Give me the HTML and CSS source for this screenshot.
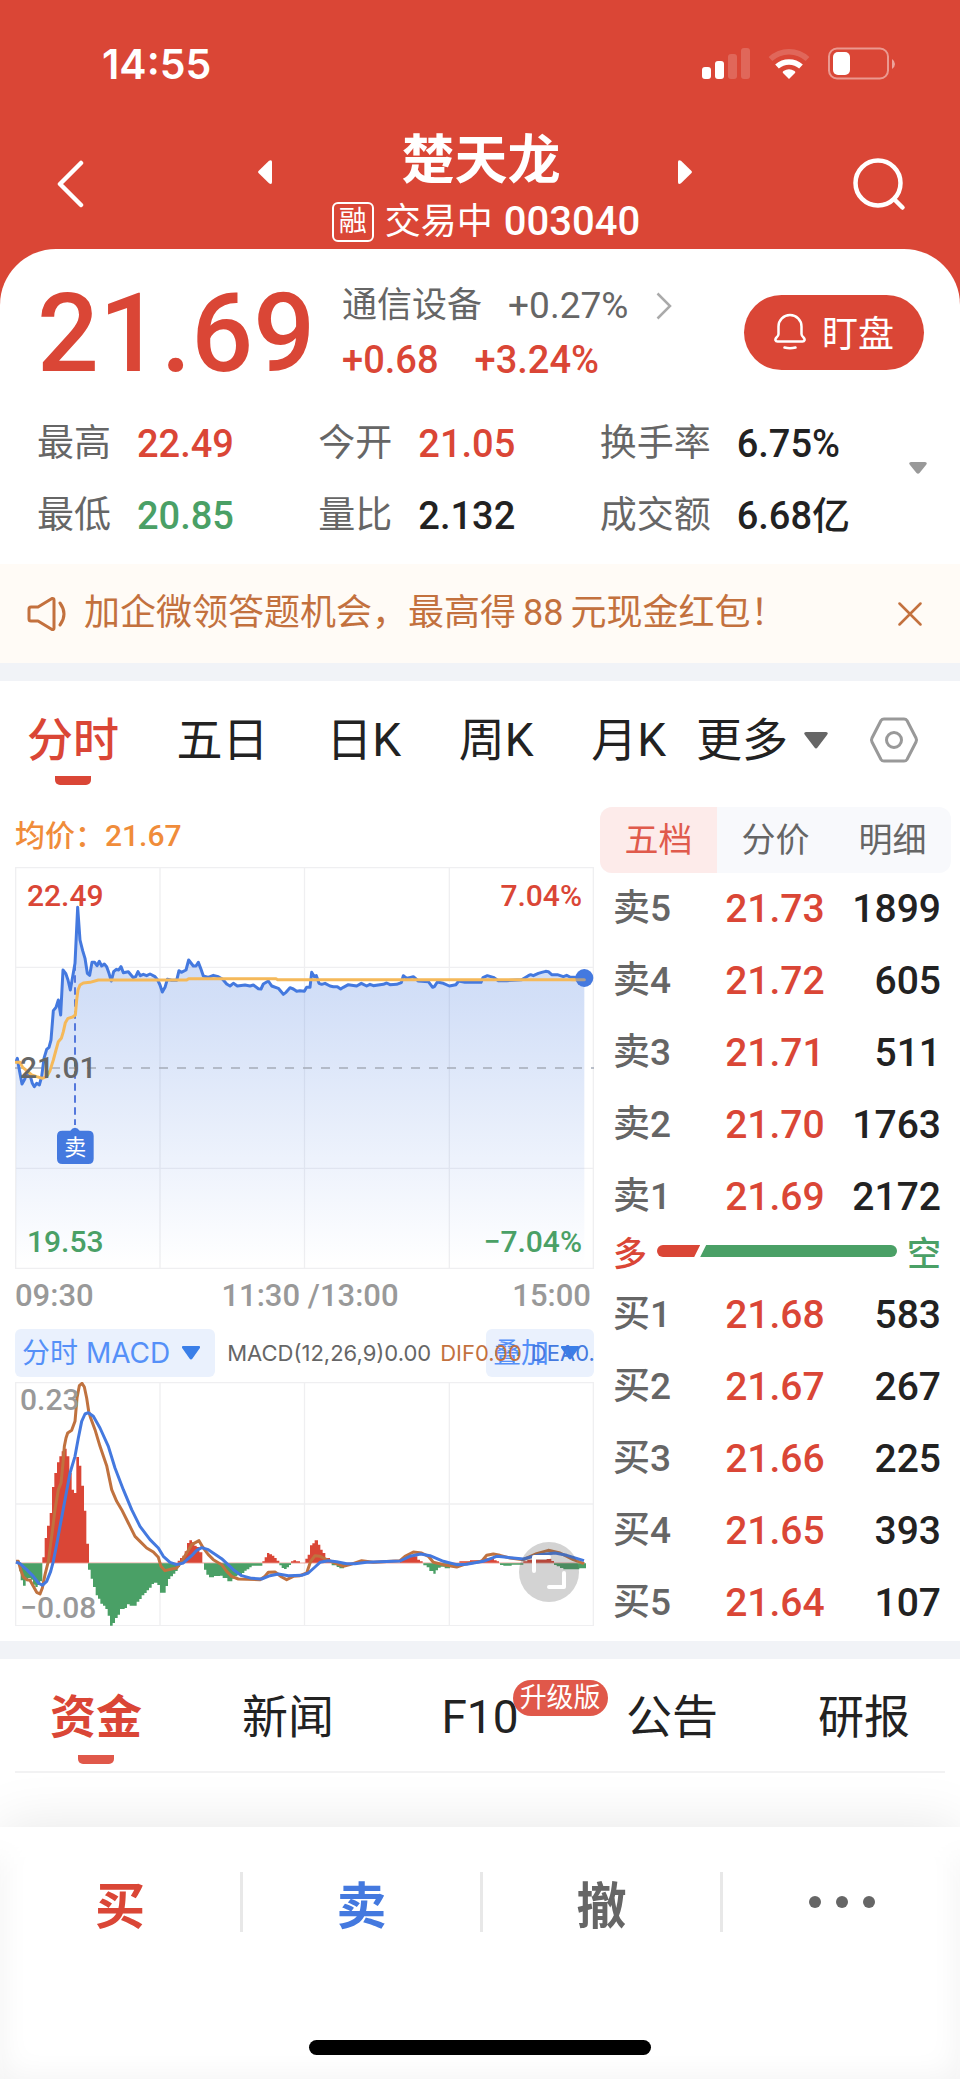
FILE: index.html
```html
<!DOCTYPE html>
<html lang="zh-CN">
<head>
<meta charset="utf-8">
<meta name="viewport" content="width=device-width, initial-scale=1">
<title>楚天龙 003040</title>
<link rel="stylesheet" href="styles.css">
</head>
<body>
<header class="header">
  <div class="status">
    <span class="status-time">14:55</span>
    <svg class="status-icons" viewBox="0 0 194 34" aria-hidden="true">
      <g fill="#fff">
        <rect x="0" y="20" width="9" height="12" rx="3"/>
        <rect x="13" y="14" width="9" height="18" rx="3"/>
        <rect x="26" y="7" width="9" height="25" rx="3" opacity=".18"/>
        <rect x="39" y="1" width="9" height="31" rx="3" opacity=".18"/>
        <path d="M87 32l-6-6q-1-1 .5-2a10 10 0 0 1 11 0q1.500 1 .5 2z"/>
        <rect x="131" y="5" width="17" height="23" rx="5"/>
        <path d="M190 12q3 2 3 5t-3 5z" opacity=".5"/>
      </g>
      <g fill="none" stroke="#fff">
        <path d="M75 19.500a18 18 0 0 1 24 0" stroke-width="5.500"/>
        <path d="M68.500 12a27 27 0 0 1 37 0" stroke-width="5.500" opacity=".18"/>
        <rect x="127" y="1.500" width="59" height="30" rx="8" stroke-width="2" opacity=".45"/>
      </g>
    </svg>
  </div>
  <nav class="nav">
    <button class="nav-button" type="button" aria-label="返回">
      <svg width="28" height="50" viewBox="0 0 28 50" fill="none" stroke="#fff" stroke-width="4.500" stroke-linecap="round" stroke-linejoin="round"><path d="M25 4L4 25l21 21"/></svg>
    </button>
    <div class="nav-center">
      <div class="title-row">
        <button class="step" type="button" aria-label="上一只"><svg width="14" height="24" viewBox="0 0 14 24" fill="#fff"><path d="M.5 11L11 .8Q14-1 14 2v20q0 3-3 1.200L.5 13q-.8-1 0-2z"/></svg></button>
        <h1 class="title">楚天龙</h1>
        <button class="step" type="button" aria-label="下一只"><svg width="14" height="24" viewBox="0 0 14 24" fill="#fff"><path d="M13.500 11L3 .8Q0-1 0 2v20q0 3 3 1.200L13.500 13q.8-1 0-2z"/></svg></button>
      </div>
      <div class="subtitle">
        <span class="margin-tag">融</span>
        <span class="trading">交易中</span>
        <span class="code">003040</span>
      </div>
    </div>
    <button class="nav-button nav-search" type="button" aria-label="搜索">
      <svg width="54" height="54" viewBox="0 0 54 54" fill="none" stroke="#fff" stroke-width="4.500" stroke-linecap="round"><circle cx="26" cy="26" r="22.500"/><path d="M43 43l7.500 7.500"/></svg>
    </button>
  </nav>
</header>

<main>
  <section class="quote">
    <div class="quote-top">
      <strong class="price">21.69</strong>
      <div class="quote-info">
        <a class="sector" href="#sector"><span>通信设备</span><span class="num">+0.27%</span>
          <svg width="16" height="28" viewBox="0 0 16 28" fill="none" stroke="#aaa" stroke-width="2.500"><path d="M1.500 1.500L14 14 1.500 26.500"/></svg></a>
        <div class="change"><span>+0.68</span><span>+3.24%</span></div>
      </div>
      <button class="watch" type="button">
        <svg width="32" height="37" viewBox="0 0 32 37" fill="none" stroke="#fff" stroke-width="2.500" stroke-linecap="round" stroke-linejoin="round"><path d="M4.500 21V13.500a11.500 11.500 0 0 1 23 0V21q0 2 2 3.500c2 2 1 4-1 4h-25c-2 0-3-2-1-4q2-1.500 2-3.500z"/><path d="M10.500 34.500q5.500 1.500 11 0"/></svg>
        盯盘
      </button>
    </div>
    <div class="stats-wrap">
      <dl class="stats">
        <div class="stat"><dt>最高</dt><dd class="up">22.49</dd></div>
        <div class="stat"><dt>今开</dt><dd class="up">21.05</dd></div>
        <div class="stat"><dt>换手率</dt><dd>6.75%</dd></div>
        <div class="stat"><dt>最低</dt><dd class="down">20.85</dd></div>
        <div class="stat"><dt>量比</dt><dd>2.132</dd></div>
        <div class="stat"><dt>成交额</dt><dd>6.68亿</dd></div>
      </dl>
      <button class="expand-stats" type="button" aria-label="展开"><svg width="18" height="12" viewBox="0 0 18 12" fill="#999"><path d="M2 0h14q3 .5 1 3l-6.500 8q-1.500 1.500-3 0L1 3Q-1 .5 2 0z"/></svg></button>
    </div>
  </section>

  <aside class="notice">
    <svg width="40" height="36" viewBox="0 0 40 36" fill="none" stroke="#c3713e" stroke-width="3" stroke-linejoin="round" stroke-linecap="round"><path d="M4 11h7L25 2.500q2-.5 2 1.500v28q0 2-2 1.500L11 25H4q-2 0-2-2V13q0-2 2-2z"/><path d="M33 7q8 11 0 22"/></svg>
    <p class="notice-text">加企微领答题机会，最高得<span class="notice-num">88</span>元现金红包！</p>
    <button class="close" type="button" aria-label="关闭"><svg width="24" height="24" viewBox="0 0 24 24" fill="none" stroke="#c3713e" stroke-width="2.500" stroke-linecap="round"><path d="M1.500 1.500l21 21M22.500 1.500l-21 21"/></svg></button>
  </aside>

  <nav class="periods">
    <div class="period-list">
      <button class="period active" type="button">分时</button>
      <button class="period" type="button">五日</button>
      <button class="period" type="button">日K</button>
      <button class="period" type="button">周K</button>
      <button class="period" type="button">月K</button>
    </div>
    <button class="period more" type="button">更多<svg width="24" height="17" viewBox="0 0 24 17" fill="#666"><path d="M2 0h20q3 .5 1 3L13.500 15.500q-1.500 2-3 0L1 3Q-1 .5 2 0z"/></svg></button>
    <button class="settings" type="button" aria-label="设置"><svg width="50" height="46" viewBox="0 0 50 46" fill="none" stroke="#999" stroke-width="3"><path d="M15 2h20q2 0 3 1.500L47 21q1 2 0 4l-9 17.500Q37 44 35 44H15q-2 0-3-1.500L3 25q-1-2 0-4l9-17.500Q13 2 15 2z" stroke-linejoin="round"/><circle cx="25" cy="23" r="7.500"/></svg></button>
  </nav>

  <div class="market">
    <section class="charts">
      <p class="average">均价：<span>21.67</span></p>
      <div class="chart">
        <svg class="plot" viewBox="45 201 1737 1206" role="img" aria-label="分时走势">
          <defs><linearGradient id="fade" x1="0" y1="320" x2="0" y2="1400" gradientUnits="userSpaceOnUse"><stop offset="0" stop-color="#4479df" stop-opacity=".27"/><stop offset=".25" stop-color="#4479df" stop-opacity=".24"/><stop offset=".72" stop-color="#4479df" stop-opacity=".09"/><stop offset="1" stop-color="#4479df" stop-opacity="0"/></linearGradient></defs>
          <g stroke="#efeff1" stroke-width="4" fill="none"><path d="M47 203H1780V1405H47zM480 203V1405M913.500 203V1405M1348 203V1405M47 502H1780M47 1105H1780"/></g>
          <path fill="url(#fade)" d="M48 1405V785L52 775 58 810 66 852 74 838 82 815 90 825 97 850 103 860 110 850 118 855 125 830 132 775 140 748 147 742 153 720 160 632 168 622 175 600 182 645 189 510 197 520 204 540 211 570 218 530 225 490 233 322 240 420 248 452 255 475 262 520 269 526 276 487 284 487 291 497 298 484 305 498 313 492 320 500 327 520 334 543 341 515 349 508 363 500 370 518 385 515 400 533 414 515 421 527 465 530 487 576 502 538 530 541 537 512 558 510 566 480 580 498 595 487 610 528 640 526 668 538 690 558 760 555 783 567 805 543 835 565 850 583 870 563 890 574 913 574 930 562 935 517 957 550 1022 567 1045 554 1204 548 1210 527 1240 530 1255 543 1285 545 1298 562 1312 546 1348 558 1376 543 1443 547 1462 527 1495 542 1565 539 1602 522 1637 514 1655 524 1753 534V1405z"/>
          <path d="M45 804H1782" stroke="#a5acb8" stroke-width="5" stroke-dasharray="27 27"/>
          <path d="M225 490V975" stroke="#5478dc" stroke-width="6" stroke-dasharray="22 14"/>
          <g fill="none" stroke-width="9" stroke-linejoin="round" stroke-linecap="round">
            <path stroke="#4479df" d="M48 785L52 775 58 810 66 852 74 838 82 815 90 825 97 850 103 860 110 850 118 855 125 830 132 775 140 748 147 742 153 720 160 632 168 622 175 600 182 645 189 510 197 520 204 540 211 570 218 530 225 490 233 322 240 420 248 452 255 475 262 520 269 526 276 487 284 487 291 497 298 484 305 498 313 492 320 500 327 520 334 543 341 515 349 508 356 510 363 500 370 518 385 515 400 533 407 530 414 515 421 527 430 523 440 527 450 522 465 530 473 540 480 555 487 576 495 562 502 538 515 541 530 541 537 512 544 517 558 510 566 480 580 498 588 498 595 487 602 505 610 528 625 532 640 526 655 530 668 538 680 552 690 558 700 550 712 558 735 555 750 558 760 555 775 566 783 567 790 552 805 543 815 558 835 565 850 583 858 577 870 563 880 567 890 574 900 572 913 574 920 562 930 562 935 517 943 530 949 527 957 550 965 553 975 550 990 558 1000 560 1012 560 1022 567 1030 562 1045 554 1070 558 1084 550 1100 558 1110 553 1120 557 1150 553 1160 549 1170 554 1190 553 1204 548 1210 527 1220 535 1240 530 1255 543 1285 545 1298 562 1303 560 1312 546 1330 550 1348 558 1368 554 1376 543 1395 547 1443 547 1449 533 1462 527 1480 532 1495 542 1520 542 1565 539 1585 527 1592 524 1600 527 1615 520 1625 517 1637 514 1645 515 1655 524 1672 524 1690 530 1700 526 1710 531 1722 532 1753 534"/>
            <path stroke="#f5b95a" d="M48 787H60L68 802 80 812 95 825 110 830 127 835 140 830 150 812 160 780 168 750 175 725 184 715 190 695 196 668 204 655 218 651 226 645 230 600 234 570 240 555 250 549 270 547 295 540H560L566 536H828L832 539H1753"/>
          </g>
          <circle cx="1753" cy="534" r="27" fill="#4479df"/>
          <path d="M1715 539H1753" stroke="#f5b95a" stroke-width="9" stroke-linecap="round" opacity=".6"/>
          <path d="M225 983q8 0 14 9H265q16 0 16 16v68q0 16-16 16H187q-16 0-16-16v-68q0-16 16-16h24q6-9 14-9z" fill="#4479df"/>
          <text class="marker" x="226" y="1066" text-anchor="middle">卖</text>
        </svg>
        <span class="tick high-price">22.49</span>
        <span class="tick high-pct">7.04%</span>
        <span class="tick mid-price">21.01</span>
        <span class="tick low-price">19.53</span>
        <span class="tick low-pct">−7.04%</span>
      </div>
      <div class="times"><span>09:30</span><span class="times-mid">11:30 /13:00</span><span>15:00</span></div>
      <div class="indicator">
        <button class="chip" type="button">分时 MACD<svg width="18" height="14" viewBox="0 0 18 14" fill="#3a7fe8"><path d="M1 0h16q2 .5 .5 2.500L10.500 12.500q-1.500 2-3 0L.5 2.500Q-1 .5 1 0z"/></svg></button>
        <button class="chip overlay" type="button">叠加<svg width="18" height="14" viewBox="0 0 18 14" fill="#3a7fe8"><path d="M1 0h16q2 .5 .5 2.500L10.500 12.500q-1.500 2-3 0L.5 2.500Q-1 .5 1 0z"/></svg></button>
        <p class="legend"><span>MACD(12,26,9)0.00</span><span class="dif">DIF0.00</span><span class="dea">DEA0.00</span></p>
      </div>
      <div class="chart">
        <svg class="plot" viewBox="45 367 1737 733" role="img" aria-label="MACD">
          <g stroke="#efeff1" stroke-width="4" fill="none"><path d="M47 369H1780V1098H47zM480 369V1098M913.500 369V1098M1348 369V1098M47 733H1780"/></g>
          <path stroke="#da4636" stroke-opacity=".5" stroke-width="3" d="M47 910H1755"/>
          <g fill="#da4636">
            <path d="M127 909V893H134V835H141V798H149V760H156V682H163V640H171V608H178V590H185V575H193V567H200V590H208V640H215V690H222V700H229V592H237V618H244V678H252V753H259V852H267V909z"/>
            <path d="M533 909V903H540V895H547V888H554V875H561V850H568V842H576V848H583V858H590V862H598V878H607V909z"/>
            <path d="M787 909V905H794V893H801V880H808V884H816V888H823V895H830V903H838V909zM873 909V905H880V902H888V905H900V909z"/>
            <path d="M916 909V897H923V885H930V857H937V851H944V842H954V855H961V870H968V880H976V895H990V904H1005V909z"/>
            <path d="M1200 909V900H1208V892H1218V886H1245V890H1252V900H1260V905H1268V909z"/>
            <path d="M1378 909V905H1410V902H1440V900H1450V896H1482V902H1490V905H1497V909z"/>
            <path d="M1570 909V905H1582V900H1640V898H1654V904H1662V909z"/>
          </g>
          <g fill="#4aa066">
            <path d="M58 911V935H62V962H69V978H77V960H84V955H92V960H99V975H106V982H113V976H120V965H127V911z"/>
            <path d="M264 911V930H272V957H279V982H287V1007H294V1017H301V1032H309V1038H316V1048H323V1068H330V1098H338V1090H345V1075H353V1065H360V1048H374V1045H381V1034H389V1038H410V1026H418V1018H425V1007H433V1000H440V992H447V984H455V973H462V969H472V976H480V999H497V979H504V958H511V950H519V942H526V934H533V922H540V911z"/>
            <path d="M612 911V930H619V945H627V953H642V949H660V948H668V955H682V965H697V957H704V950H712V946H726V940H733V933H740V929H748V923H755V918H787V911z"/>
            <path d="M838 911V917H845V925H852V928H860V923H867V916H873V911z"/>
            <path d="M995 911V917H1010V922H1018V926H1032V920H1040V915H1050V911z"/>
            <path d="M1270 911V917H1280V923H1288V934H1300V942H1307V932H1314V924H1322V921H1334V926H1350V921H1370V915H1378V911z"/>
            <path d="M1500 911V916H1510V918H1535V915H1570V911z"/>
            <path d="M1662 911V916H1670V920H1680V925H1690V929H1738V926H1758V911z"/>
          </g>
          <g fill="none" stroke-width="9" stroke-linejoin="round">
            <path stroke="#c0723f" d="M48 905H55L62 930 70 952 80 960 90 962 100 980 110 998 120 1003 127 985 135 945 145 905 155 830 165 750 175 690 183 670 188 620 193 560 198 535 203 520 215 512 225 485 231 415 238 378 246 371 253 382 260 415 266 455 272 475 285 510 300 560 320 618 335 690 350 725 365 750 385 790 405 830 420 845 440 865 460 877 475 893 483 920 495 933 515 928 530 925 545 905 560 880 575 855 597 843 608 862 625 885 640 900 665 915 680 935 695 950 715 958 780 960 795 950 805 938 825 937 845 952 860 960 880 950 900 948 920 940 932 905 945 888 960 890 980 900 1005 910 1030 920 1050 915 1085 903 1120 908 1200 903 1215 890 1240 877 1265 880 1285 890 1300 908 1330 915 1370 922 1400 912 1445 905 1460 887 1480 883 1500 887 1530 895 1570 900 1610 882 1645 872 1680 880 1720 900 1752 912"/>
            <path stroke="#4479df" d="M48 907L60 912 80 930 100 950 115 970 127 977 140 965 152 935 160 905 170 855 180 800 195 720 210 640 225 590 235 535 245 485 255 463 265 459 280 470 300 505 325 560 345 625 370 690 395 750 420 800 450 840 475 865 490 890 510 908 530 915 550 910 575 888 590 872 605 864 625 870 665 897 700 930 725 948 755 956 785 958 810 948 835 943 865 948 905 947 925 940 945 922 960 908 985 903 1010 906 1040 912 1065 912 1100 908 1200 904 1230 890 1262 883 1290 888 1330 905 1370 915 1400 914 1450 905 1490 890 1520 893 1570 898 1620 885 1665 880 1700 887 1752 903"/>
          </g>
        </svg>
        <span class="tick macd-high">0.23</span>
        <span class="tick macd-low">−0.08</span>
        <button class="fullscreen" type="button" aria-label="全屏"><svg width="60" height="60" viewBox="0 0 60 60" fill="none" stroke="#fff" stroke-width="4" stroke-linecap="round" stroke-linejoin="round"><path d="M15 29V15h15M30 45h15V31"/></svg></button>
      </div>
    </section>

    <section class="depth">
      <div class="depth-tabs">
        <button class="depth-tab active" type="button">五档</button>
        <button class="depth-tab" type="button">分价</button>
        <button class="depth-tab" type="button">明细</button>
      </div>
      <table class="book">
        <tbody>
          <tr><th scope="row">卖5</th><td class="up">21.73</td><td>1899</td></tr>
          <tr><th scope="row">卖4</th><td class="up">21.72</td><td>605</td></tr>
          <tr><th scope="row">卖3</th><td class="up">21.71</td><td>511</td></tr>
          <tr><th scope="row">卖2</th><td class="up">21.70</td><td>1763</td></tr>
          <tr><th scope="row">卖1</th><td class="up">21.69</td><td>2172</td></tr>
        </tbody>
      </table>
      <div class="balance">
        <span class="up">多</span>
        <span class="balance-bar"><span class="bulls"></span><span class="bears"></span></span>
        <span class="down">空</span>
      </div>
      <table class="book">
        <tbody>
          <tr><th scope="row">买1</th><td class="up">21.68</td><td>583</td></tr>
          <tr><th scope="row">买2</th><td class="up">21.67</td><td>267</td></tr>
          <tr><th scope="row">买3</th><td class="up">21.66</td><td>225</td></tr>
          <tr><th scope="row">买4</th><td class="up">21.65</td><td>393</td></tr>
          <tr><th scope="row">买5</th><td class="up">21.64</td><td>107</td></tr>
        </tbody>
      </table>
    </section>
  </div>

  <nav class="sections">
    <button class="section-tab active" type="button">资金</button>
    <button class="section-tab" type="button">新闻</button>
    <button class="section-tab" type="button">F10<span class="upgrade">升级版</span></button>
    <button class="section-tab" type="button">公告</button>
    <button class="section-tab" type="button">研报</button>
  </nav>
</main>

<footer class="footer">
  <div class="actions">
    <button class="action buy" type="button">买</button>
    <button class="action sell" type="button">卖</button>
    <button class="action" type="button">撤</button>
    <button class="action" type="button" aria-label="更多"><svg width="68" height="14" viewBox="0 0 68 14" fill="#666"><circle cx="7" cy="7" r="6"/><circle cx="34" cy="7" r="6"/><circle cx="61" cy="7" r="6"/></svg></button>
  </div>
  <div class="home-bar"></div>
</footer>
</body>
</html>
```

FILE: styles.css
```css
:root {
  --red: #da4636;
  --green: #4aa066;
  --blue: #4479df;
  --ink: #222;
  --gray: #666;
  --band: #f1f3f7;
}

* { box-sizing: border-box; }

body {
  margin: 0;
  background: #fff;
  color: var(--ink);
  font-family: Roboto, "Noto Sans CJK SC", sans-serif;
  font-size: 36px;
}

button {
  margin: 0;
  padding: 0;
  border: 0;
  background: none;
  color: inherit;
  font: inherit;
  white-space: nowrap;
}

svg { display: block; flex: none; }
h1, p, dl, dd { margin: 0; }
.up { color: var(--red); }
.down { color: var(--green); }

.header { padding-bottom: 59px; background: var(--red); color: #fff; }
.status {
  display: flex;
  align-items: center;
  justify-content: space-between;
  height: 125px;
  padding: 3px 64px 0 102px;
}
.status-time { font: 600 41px/50px Inter, sans-serif; }
.status-icons { width: 194px; height: 34px; }
.nav { display: flex; justify-content: space-between; padding: 0 54px 0 56px; height: 124px; }
.nav-button { display: flex; flex: 1; align-items: center; height: 117px; }
.nav-search { justify-content: flex-end; }
.nav-center { flex: none; width: 51%; margin-right: 12px; }
.title-row { display: flex; align-items: center; justify-content: space-between; height: 67px; }
.step { height: 24px; margin-top: 26px; }
.title { padding: 4px 0 0 12px; font-size: 53px; font-weight: 700; line-height: 64px; }
.subtitle { display: flex; align-items: center; justify-content: center; gap: 11px; margin: 9px 0 6px 22px; line-height: 42px; }
.margin-tag {
  width: 42px;
  border: 2px solid #fff;
  border-radius: 6px;
  font-size: 28px;
  line-height: 36px;
  text-align: center;
}
.code { font-size: 40px; font-weight: 500; }

.quote {
  margin-top: -59px;
  padding: 30px 36px 12px 37px;
  border-radius: 56px 56px 0 0;
  background: #fff;
}
.quote-top { display: flex; align-items: center; margin-bottom: 19px; }
.price { margin-right: 27px; color: var(--red); font-size: 109px; font-weight: 500; line-height: 110px; }
.quote-info { flex: 1; line-height: 54px; padding-bottom: 2px; }
.sector { display: flex; align-items: center; color: var(--gray); font-size: 35px; text-decoration: none; }
.sector .num { margin: 0 28px 0 26px; font-size: 37px; }
.change { display: flex; gap: 36px; color: var(--red); font-size: 38px; font-weight: 500; }
.watch {
  display: flex;
  align-items: center;
  justify-content: center;
  gap: 16px;
  width: 180px;
  height: 75px;
  margin-bottom: 4px;
  padding-bottom: 2px;
  border-radius: 38px;
  background: var(--red);
  color: #fff;
}
.stats-wrap { display: flex; align-items: center; justify-content: space-between; margin-right: -3px; }
.stats { flex: 1; display: grid; grid-template-columns: repeat(3, 1fr); margin-right: 28px; }
.stat { display: flex; align-items: center; gap: 26px; line-height: 72px; }
.stat dt { color: var(--gray); font-size: 37px; }
.stat dd { font-size: 38px; font-weight: 500; }
.expand-stats { margin-bottom: 24px; }

.notice {
  display: flex;
  align-items: center;
  gap: 17px;
  padding: 0 38px 0 27px;
  background: #fffbf6;
  color: #c3713e;
  line-height: 99px;
}
.notice-text { flex: 1; white-space: nowrap; }
.notice-num { margin: 0 7px; }

.periods {
  display: flex;
  align-items: center;
  height: 144px;
  padding: 0 41px 8px 27px;
  border-top: 18px solid var(--band);
}
.period-list { flex: 1; display: flex; justify-content: space-between; margin-right: 30px; }
.period { position: relative; font-size: 46px; line-height: 72px; }
.period.active { color: var(--red); font-weight: 500; }
.period.active::after,
.section-tab.active::after {
  content: "";
  position: absolute;
  left: 50%;
  bottom: -9px;
  width: 36px;
  height: 9px;
  margin-left: -18px;
  border-radius: 0 0 5px 5px;
  background: var(--red);
}
.more { display: flex; align-items: center; gap: 16px; }
.settings { margin-left: 41px; }

.market {
  display: grid;
  grid-template-columns: 579fr 351fr;
  gap: 6px;
  padding: 0 9px 0 15px;
}
.average { color: #f08c3a; font-size: 30px; font-weight: 500; line-height: 58px; padding-bottom: 2px; }
.chart { position: relative; }
.plot { width: 100%; height: auto; }
.marker { fill: #fff; font-size: 66px; }
.tick { position: absolute; font-size: 30px; font-weight: 500; line-height: 36px; }
.high-price { top: 11px; left: 12px; color: var(--red); }
.high-pct { top: 11px; right: 12px; color: var(--red); }
.mid-price { top: 50%; left: 5px; margin-top: -18px; color: var(--gray); }
.low-price { bottom: 9px; left: 12px; color: var(--green); }
.low-pct { bottom: 9px; right: 12px; color: var(--green); }
.macd-high { top: 0; left: 5px; color: #999; }
.macd-low { bottom: 0; left: 5px; color: #999; }
.times { display: flex; justify-content: space-between; color: #999; font-size: 31px; font-weight: 500; line-height: 54px; padding: 0 3px 6px 0; }
.times-mid { margin-left: 14px; }
.indicator { position: relative; display: flex; align-items: center; gap: 12px; height: 48px; margin-bottom: 5px; overflow: hidden; }
.chip {
  display: flex;
  align-items: center;
  gap: 12px;
  height: 48px;
  padding: 0 15px 0 7px;
  border-radius: 6px;
  background: #eaf1fd;
  color: #5590f8;
  font: 28px/48px Inter, "Noto Sans CJK SC", sans-serif;
}
.overlay { position: absolute; top: 0; right: 0; }
.legend { position: relative; display: flex; gap: 9px; flex: 1; width: 0; overflow: hidden; color: var(--gray); font: 22px/48px Inter, sans-serif; white-space: nowrap; }
.dif { color: #c3713e; }
.dea { color: var(--blue); }
.fullscreen { position: absolute; right: 15px; bottom: 24px; border-radius: 50%; background: rgba(80, 80, 80, .25); }

.depth-tabs { display: grid; grid-template-columns: repeat(3, 1fr); border-radius: 12px; overflow: hidden; background: #f8f9fc; }
.depth-tab { color: var(--gray); font-size: 34px; line-height: 66px; }
.depth-tab.active { background: #fdebea; color: #e05a4c; }
.book { width: 100%; border-collapse: collapse; line-height: 72px; font-size: 39px; font-weight: 500; }
.book th, .book td { padding: 0; text-align: right; }
.book th { width: 30%; padding-left: 13px; color: var(--gray); font-size: 37px; font-weight: 500; text-align: left; }
.book td:last-child { padding-right: 10px; width: 36%; }
.balance { display: flex; align-items: center; gap: 10px; height: 36px; margin-bottom: 10px; padding: 0 10px 0 13px; font-size: 34px; font-weight: 500; }
.balance-bar { flex: 1; display: flex; height: 12px; border-radius: 6px; overflow: hidden; }
.bulls { width: 18%; background: var(--red); clip-path: polygon(0 0, 100% 0, calc(100% - 6px) 100%, 0 100%); }
.bears { flex: 1; background: var(--green); clip-path: polygon(6px 0, 100% 0, 100% 100%, 0 100%); }

.sections {
  display: grid;
  grid-template-columns: repeat(5, 1fr);
  margin-top: 2px;
  border-top: 18px solid var(--band);
  background: linear-gradient(#f2f2f3, #f2f2f3) center bottom / calc(100% - 30px) 2px no-repeat;
}
.section-tab { position: relative; font-size: 46px; line-height: 96px; padding: 10px 0 8px; }
.section-tab.active { color: var(--red); font-weight: 700; }
.section-tab.active::after { bottom: 9px; background: #e0584a; }
.upgrade {
  position: absolute;
  left: 67%;
  top: 21px;
  padding: 0 7px;
  border-radius: 18px;
  background: #e0584a;
  color: #fff;
  font-size: 27px;
  line-height: 36px;
}

.footer {
  margin-top: 54px;
  padding: 45px 0 24px;
  background: #fff;
  box-shadow: 0 0 54px rgba(0, 0, 0, .1), inset 0 45px 30px -15px #fff, inset 0 0 32px rgba(0, 0, 0, .06);
}
.actions { display: grid; grid-template-columns: repeat(4, 1fr); }
.action { display: flex; align-items: center; justify-content: center; height: 60px; color: var(--gray); font-size: 50px; font-weight: 700; }
.action + .action { border-left: 3px solid #e8e8e8; }
.buy { color: var(--red); }
.sell { color: var(--blue); }
.home-bar { width: 342px; height: 15px; margin: 108px auto 0; border-radius: 8px; background: #000; }
```
